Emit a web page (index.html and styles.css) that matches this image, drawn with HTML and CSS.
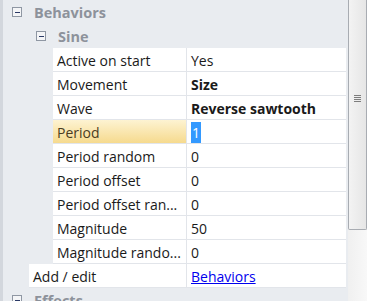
FILE: index.html
```html
<!DOCTYPE html>
<html>
<head>
  <title>Properties</title>
  <link rel="stylesheet" href="styles.css">
</head>
<body>
  <div class="panel">
    <div class="grid">
      <div class="category top">
        <span class="toggle"></span>
        <span class="cat-name">Behaviors</span>
      </div>
      <div class="category sub">
        <span class="toggle"></span>
        <span class="cat-name">Sine</span>
      </div>

      <div class="rows">
        <div class="row"><div class="label">Active on start</div><div class="value">Yes</div></div>
        <div class="row"><div class="label">Movement</div><div class="value bold">Size</div></div>
        <div class="row"><div class="label">Wave</div><div class="value bold">Reverse sawtooth</div></div>
        <div class="row selected"><div class="label">Period</div><div class="value"><span class="sel-text">1</span></div></div>
        <div class="row"><div class="label">Period random</div><div class="value">0</div></div>
        <div class="row"><div class="label">Period offset</div><div class="value">0</div></div>
        <div class="row"><div class="label">Period offset ran...</div><div class="value">0</div></div>
        <div class="row"><div class="label">Magnitude</div><div class="value">50</div></div>
        <div class="row"><div class="label">Magnitude rando...</div><div class="value">0</div></div>
      </div>

      <div class="rows outer">
        <div class="row"><div class="label">Add / edit</div><div class="value"><a href="#">Behaviors</a></div></div>
      </div>

      <div class="category top">
        <span class="toggle"></span>
        <span class="cat-name">Effects</span>
      </div>
    </div>

    <div class="scrollbar">
      <div class="thumb">
        <div class="grip"></div>
      </div>
    </div>
  </div>
</body>
</html>
```

FILE: styles.css
```css
body {
  margin: 0;
  font-family: "Open Sans", "Noto Sans", sans-serif;
  font-size: 14px;
  color: #1a1a1a;
  background-color: #e9ecf0;
  overflow: hidden;
}

.panel {
  display: flex;
  height: 301px;
  border-left: 3px solid #d3d7dd;
}

.grid {
  flex: 1;
  padding-right: 2px;
}

.category {
  display: flex;
  align-items: center;
  height: 24px;
  font-weight: bold;
  font-size: 14.5px;
  color: #8d929b;
}

.category.top {
  padding-left: 9px;
}

.category.sub {
  padding-left: 33px;
}

.toggle {
  position: relative;
  width: 8px;
  height: 8px;
  border: 1px solid #8f97a3;
  background-color: #f4f5f7;
  margin-right: 12px;
}

.toggle::after {
  content: "";
  position: absolute;
  left: 2px;
  top: 4px;
  width: 5px;
  height: 1px;
  background-color: #2b3a66;
}

.rows {
  margin-left: 50px;
  background-color: #fff;
}

.rows.outer {
  margin-left: 26px;
}

.row {
  display: flex;
  height: 23px;
  border-bottom: 1px solid #e2e5ea;
}

.label {
  width: 129px;
  padding-left: 4px;
  padding-top: 1px;
  border-right: 1px solid #e2e5ea;
  line-height: 23px;
  white-space: nowrap;
  overflow: hidden;
}

.outer .label {
  width: 153px;
}

.value {
  flex: 1;
  padding-left: 4px;
  padding-top: 1px;
  line-height: 23px;
  white-space: nowrap;
}

.bold {
  font-weight: bold;
}

.selected .label {
  background: linear-gradient(to bottom, #fdf3d2, #f6da8e);
  color: #4a3c22;
}

.sel-text {
  background-color: #3399ff;
  color: #fff;
  padding: 1px 1px;
}

.value a {
  color: #0000ee;
}

.scrollbar {
  width: 19px;
  background: linear-gradient(to right, #f0f0f0, #f8f8f8);
}

.thumb {
  display: flex;
  align-items: flex-start;
  justify-content: center;
  height: 229px;
  border: 1px solid #a8acb2;
  border-top: none;
  border-radius: 0 0 2px 2px;
  background: linear-gradient(to right, #f3f3f3, #e6e6e6);
}

.grip {
  margin-top: 95px;
  width: 7px;
  height: 7px;
  background: repeating-linear-gradient(to bottom, #7d7d7d 0, #7d7d7d 1px, transparent 1px, transparent 2px);
}
```
